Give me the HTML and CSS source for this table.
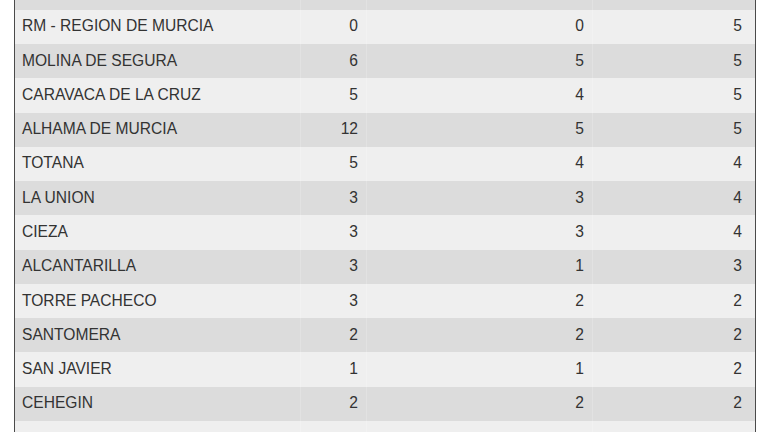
FILE: index.html
```html
<!DOCTYPE html>
<html>
<head>
<meta charset="utf-8">
<link rel="stylesheet" href="styles.css">
</head>
<body>
<div class="wrap">
<div class="tbl">
<div class="row odd"><div class="name"></div><div class="num"></div><div class="num"></div><div class="num last"></div></div>
<div class="row even"><div class="name">RM - REGION DE MURCIA</div><div class="num">0</div><div class="num">0</div><div class="num last">5</div></div>
<div class="row odd"><div class="name">MOLINA DE SEGURA</div><div class="num">6</div><div class="num">5</div><div class="num last">5</div></div>
<div class="row even"><div class="name">CARAVACA DE LA CRUZ</div><div class="num">5</div><div class="num">4</div><div class="num last">5</div></div>
<div class="row odd"><div class="name">ALHAMA DE MURCIA</div><div class="num">12</div><div class="num">5</div><div class="num last">5</div></div>
<div class="row even"><div class="name">TOTANA</div><div class="num">5</div><div class="num">4</div><div class="num last">4</div></div>
<div class="row odd"><div class="name">LA UNION</div><div class="num">3</div><div class="num">3</div><div class="num last">4</div></div>
<div class="row even"><div class="name">CIEZA</div><div class="num">3</div><div class="num">3</div><div class="num last">4</div></div>
<div class="row odd"><div class="name">ALCANTARILLA</div><div class="num">3</div><div class="num">1</div><div class="num last">3</div></div>
<div class="row even"><div class="name">TORRE PACHECO</div><div class="num">3</div><div class="num">2</div><div class="num last">2</div></div>
<div class="row odd"><div class="name">SANTOMERA</div><div class="num">2</div><div class="num">2</div><div class="num last">2</div></div>
<div class="row even"><div class="name">SAN JAVIER</div><div class="num">1</div><div class="num">1</div><div class="num last">2</div></div>
<div class="row odd"><div class="name">CEHEGIN</div><div class="num">2</div><div class="num">2</div><div class="num last">2</div></div>
<div class="row even"><div class="name"></div><div class="num"></div><div class="num"></div><div class="num last"></div></div>
</div>
</div>
</body>
</html>
```
FILE: styles.css
```css
html, body {
  margin: 0;
  padding: 0;
  background: #ffffff;
  overflow: hidden;
}
.wrap {
  padding-left: 14px;
  margin-top: -24.5px;
}
.tbl {
  width: 740px;
  border-left: 1px solid #4a4a4a;
  border-right: 1px solid #4a4a4a;
  font-family: "Liberation Sans", Arial, sans-serif;
  font-size: 15.6px;
  color: #333333;
}
.row {
  display: grid;
  grid-template-columns: 285px 66px 226px 163px;
  height: 34.27px;
  align-items: center;
}
.row.odd { background: #dcdcdc; }
.row.even { background: #efefef; }
.row > div {
  height: 100%;
  display: flex;
  align-items: center;
  padding: 0 8px 1px 7px;
  box-sizing: border-box;
  white-space: nowrap;
}
.row > .num {
  justify-content: flex-end;
  border-left: 1px solid rgba(255, 255, 255, 0.18);
}
.row > .last {
  padding-right: 13px;
}
```
